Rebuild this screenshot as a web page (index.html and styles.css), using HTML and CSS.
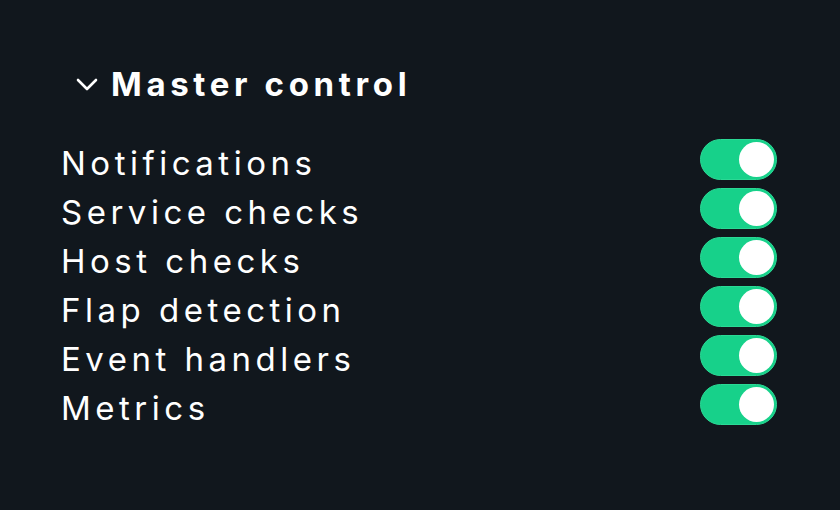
FILE: index.html
```html
<!DOCTYPE html>
<html>
<head>
<meta charset="utf-8">
<link rel="stylesheet" href="styles.css">
</head>
<body>
<div class="panel">
  <div class="header">
    <svg class="chev" width="24" height="24" viewBox="0 0 24 24"><path d="M3 8 L12 17 L21 8" fill="none" stroke="#fff" stroke-width="2.6" stroke-linecap="round" stroke-linejoin="round"/></svg>
    <span class="title">Master control</span>
  </div>
  <div class="list">
    <div class="row"><span class="label">Notifications</span><span class="toggle"><span class="knob"></span></span></div>
    <div class="row"><span class="label">Service checks</span><span class="toggle"><span class="knob"></span></span></div>
    <div class="row"><span class="label">Host checks</span><span class="toggle"><span class="knob"></span></span></div>
    <div class="row"><span class="label">Flap detection</span><span class="toggle"><span class="knob"></span></span></div>
    <div class="row"><span class="label">Event handlers</span><span class="toggle"><span class="knob"></span></span></div>
    <div class="row"><span class="label">Metrics</span><span class="toggle"><span class="knob"></span></span></div>
  </div>
</div>
</body>
</html>
```
FILE: styles.css
```css
html, body { margin: 0; padding: 0; }
body {
  background: #11171d;
  width: 840px; height: 510px;
  font-family: Inter, "Noto Sans", sans-serif;
  color: #fff;
}
.panel { padding: 60px 63px 0 61px; }
.header {
  display: flex; align-items: center;
  padding-left: 14px;
  height: 48px;
  gap: 12px;
}
.chev { display: block; }
.title { font-weight: 700; font-size: 33px; letter-spacing: 4.65px; }
.list { margin-top: 30px; display: flex; flex-direction: column; }
.row {
  display: flex; align-items: center; justify-content: space-between;
  height: 49px;
}
.label { font-size: 33px; letter-spacing: 4.5px; }
.toggle {
  width: 77px; height: 41px; border-radius: 21px;
  background: #17d18a;
  border: 1px solid #2bd995;
  display: flex; align-items: center; justify-content: flex-end;
  padding-right: 2px; box-sizing: border-box;
  margin-bottom: 6px;
}
.knob { width: 35px; height: 35px; border-radius: 50%; background: #fff; }
```
